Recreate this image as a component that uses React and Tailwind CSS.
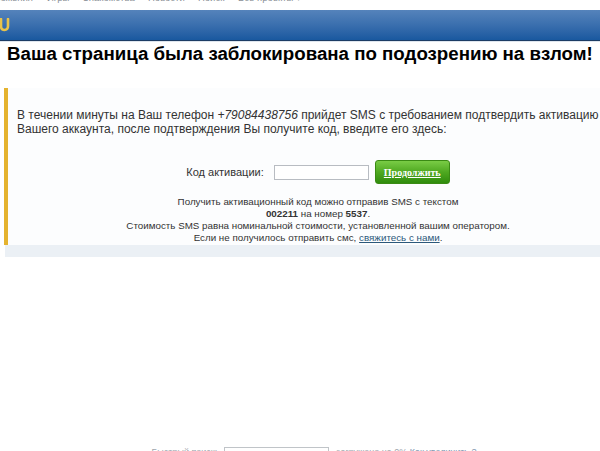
export default function App() {
  return (
    <div className="w-[600px] h-[451px] overflow-hidden bg-white font-['Liberation_Sans',Arial,sans-serif] text-[#333]">
      <div className="w-[628px] h-[451px] flex flex-col">
        {/* top menu, mostly scrolled out of view */}
        <div className="h-[10px] overflow-hidden">
          <div className="-mt-[9px] flex text-[9.5px] leading-[14px] text-[#8a8f96] whitespace-nowrap">
            <div className="w-[33px] shrink-0 flex justify-end">
              <span className="shrink-0">Приложения</span>
            </div>
            <span className="ml-[14px] w-[36px] shrink-0">Игры</span>
            <span className="w-[65px] shrink-0">Знакомства</span>
            <span className="w-[50px] shrink-0">Новости</span>
            <span className="w-[40px] shrink-0">Поиск</span>
            <span>Все проекты ▾</span>
          </div>
        </div>

        {/* header bar */}
        <div className="h-[31px] bg-gradient-to-b from-[#5583bb] via-[#3a6fae] to-[#19589f] border-b border-[#1d3c64] flex items-center">
          <svg width="11" height="14" viewBox="0 0 11 14" className="ml-[-1px]">
            <path d="M2 1 V8 Q2 12 5.5 12 Q9 12 9 8 V1" fill="none" stroke="#e9c34a" strokeWidth="2.6" strokeLinecap="round" />
          </svg>
        </div>
        <div className="h-px bg-[#dfe6ee]" />

        <h1 className="pl-[7px] pt-[1px] text-[18.7px] leading-[21px] font-bold text-black whitespace-nowrap">
          Ваша страница была заблокирована по подозрению на взлом!
        </h1>

        <div className="mt-[24px] ml-[4px] border-l-4 border-[#e5b32f] bg-[#fcfdfe] pl-[9px] pr-[9px] pt-[20px] pb-[1px]">
          <p className="text-[12px] leading-[14px] whitespace-nowrap text-[#333]">
            В течении минуты на Ваш телефон <i>+79084438756</i> прийдет SMS с требованием подтвердить активацию
            <br />
            Вашего аккаунта, после подтверждения Вы получите код, введите его здесь:
          </p>

          <div className="mt-[24px] flex items-center justify-center">
            <span className="text-[11px] leading-[14px] text-[#333]">Код активации:</span>
            <input
              type="text"
              className="ml-[10px] w-[95px] h-[15px] border border-[#b8bcc2] bg-white outline-none"
            />
            <button className="ml-[6px] w-[75px] h-[24px] rounded-[3px] bg-gradient-to-b from-[#79cc45] via-[#4fa920] to-[#2f8c0c] border border-[#3a8a14] text-white font-['Liberation_Serif',serif] font-bold text-[10px] underline">
              Продолжить
            </button>
          </div>

          <div className="mt-[12px] text-center text-[9.8px] leading-[12px] text-[#333]">
            <div>Получить активационный код можно отправив SMS с текстом</div>
            <div>
              <b>002211</b> на номер <b>5537</b>.
            </div>
            <div>Стоимость SMS равна номинальной стоимости, установленной вашим оператором.</div>
            <div>
              Если не получилось отправить смс, <a href="#" className="text-[#2b587a] underline">свяжитесь с нами</a>.
            </div>
          </div>
        </div>
        <div className="ml-[5px] h-[12px] bg-[#ebf0f5]" />

        {/* footer search, cut at the window edge */}
        <div className="mt-auto h-[6px] flex items-start justify-center gap-[7px] text-[9px] leading-[12px] text-[#a0a6ad] whitespace-nowrap">
          <span className="pt-[1px]">Быстрый поиск:</span>
          <div className="mt-[2px] w-[105px] h-[14px] border border-[#c0c4c8]" />
          <span className="pt-[1px]">
            загружено на 0% <span className="text-[#7d94ad] underline">Как увеличить ?</span>
          </span>
        </div>
      </div>
    </div>
  );
}
